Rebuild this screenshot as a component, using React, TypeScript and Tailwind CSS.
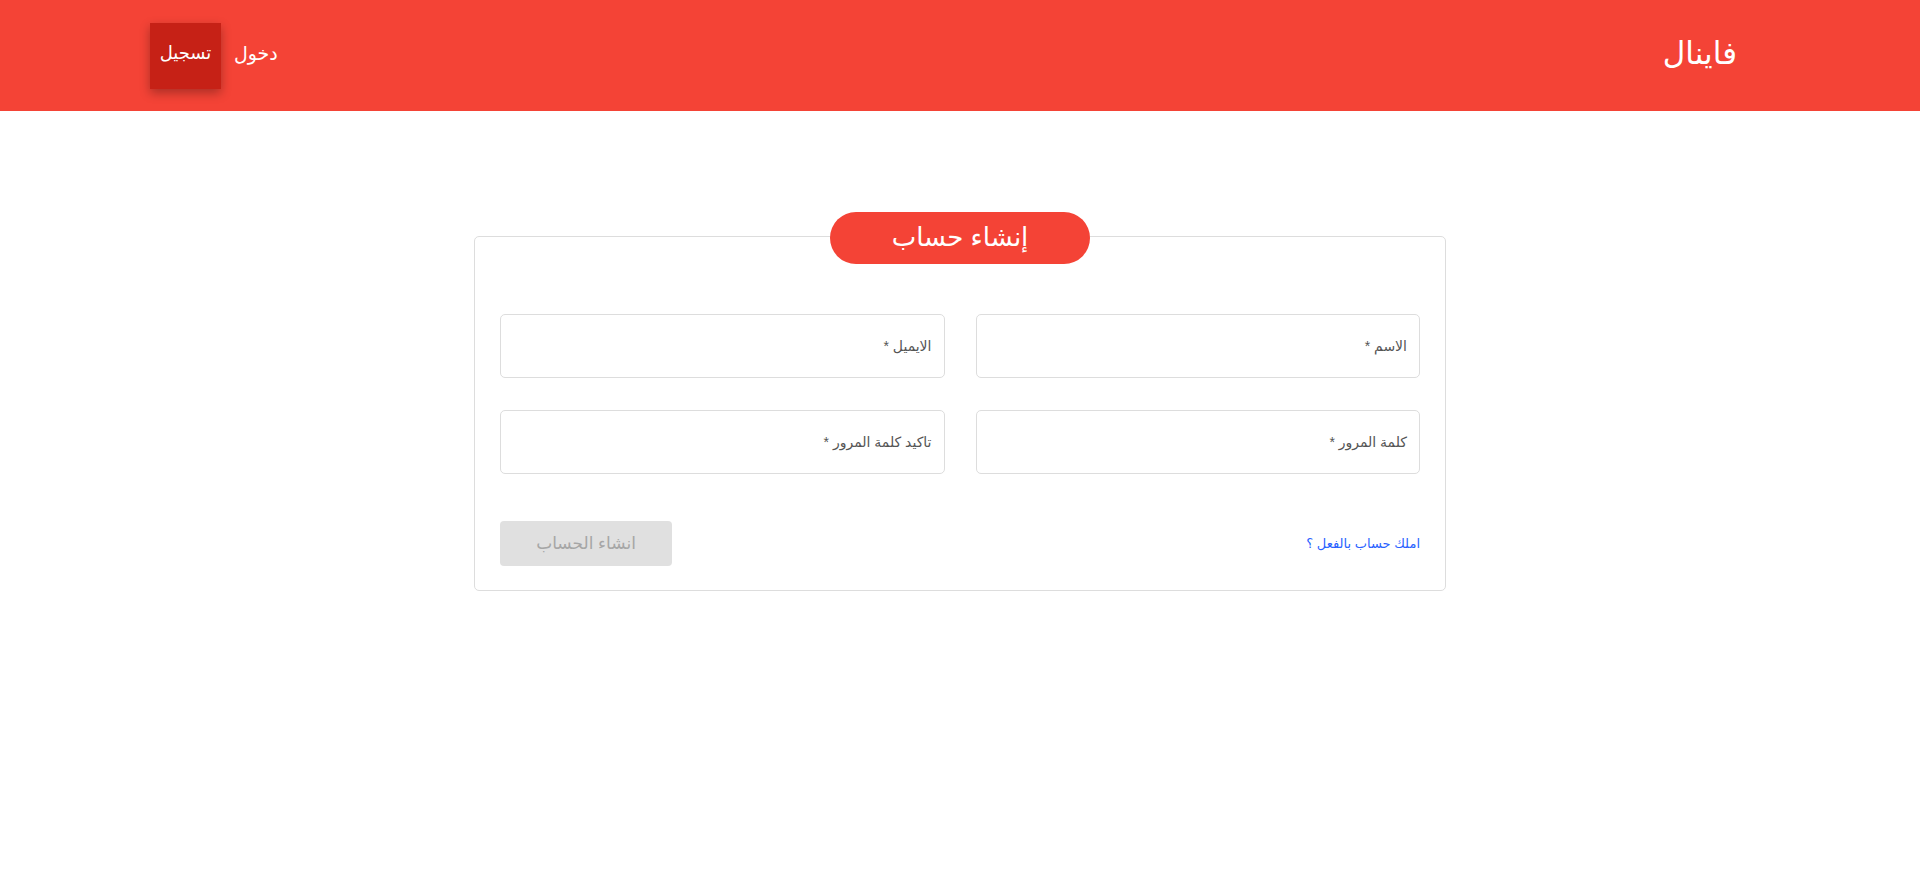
export default function App() {
  const fields = ['الاسم *', 'الايميل *', 'كلمة المرور *', 'تاكيد كلمة المرور *'];

  return (
    <div dir="rtl" className="min-h-screen bg-white" style={{ fontFamily: '"Liberation Sans", "DejaVu Sans", sans-serif' }}>
      <header className="h-[111px] bg-[#f44336] flex items-center justify-between pr-[183px] pl-[150px]">
        <div className="text-white text-[31px] leading-none -mt-[5px]">فاينال</div>
        <nav className="flex items-center gap-[13px]">
          <a className="text-white text-[19px] -mt-[3px]">دخول</a>
          <a className="h-[66px] w-[71px] flex items-center justify-center bg-[#c62116] text-white text-[18px] pb-[4px] shadow-[0_4px_10px_rgba(0,0,0,0.3)]">
            تسجيل
          </a>
        </nav>
      </header>

      <main className="flex justify-center pt-[125px]">
        <div className="relative w-[972px] border border-[#dddddd] rounded-[5px] px-[25px] pt-[77px] pb-[24px]">
          <div className="absolute left-1/2 -translate-x-1/2 -top-[25px] w-[260px] h-[52px] rounded-full bg-[#f44336] flex items-center justify-center text-white text-[26px] pb-[2px]">
            إنشاء حساب
          </div>

          <div className="grid grid-cols-2 gap-x-[31px] gap-y-[32px]">
            {fields.map((f) => (
              <div key={f} className="h-[64px] border border-[#dddddd] rounded-[5px] flex items-center px-[12px] text-[14px] text-[#555555]">
                {f}
              </div>
            ))}
          </div>

          <div className="flex items-center justify-between mt-[47px]">
            <a className="text-[13px] text-[#2962ff]">املك حساب بالفعل ؟</a>
            <button disabled className="w-[172px] h-[45px] rounded-[4px] bg-[#e0e0e0] text-[#a6a6a6] text-[17px]">
              انشاء الحساب
            </button>
          </div>
        </div>
      </main>
    </div>
  );
}
